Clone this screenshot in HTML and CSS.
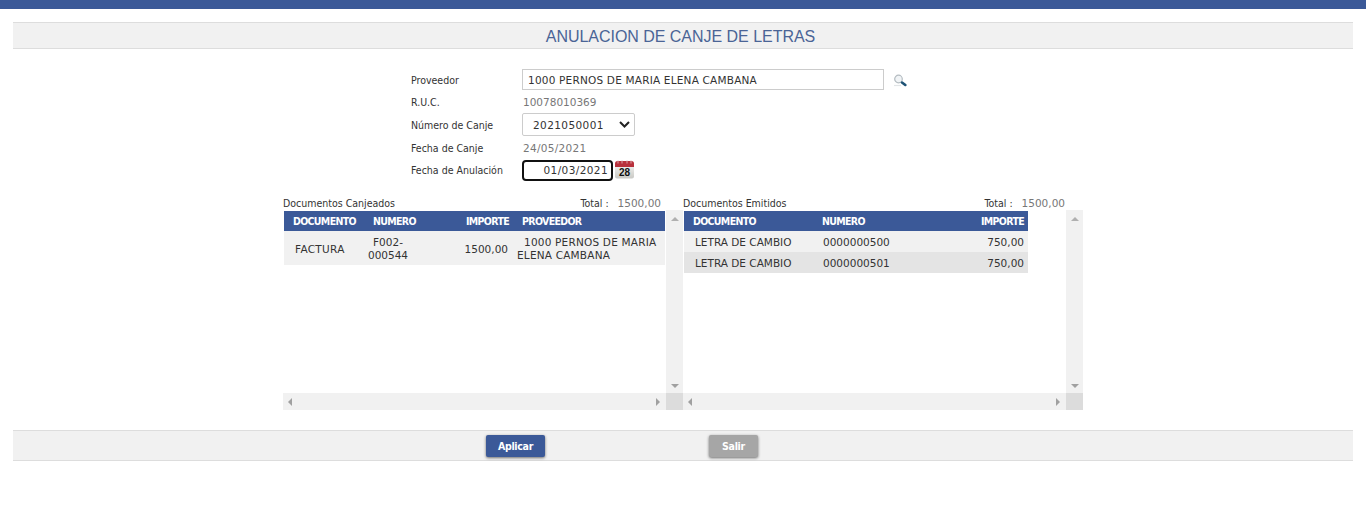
FILE: index.html
```html
<!DOCTYPE html>
<html lang="es">
<head>
<meta charset="utf-8">
<title>Anulacion de canje de letras</title>
<link rel="stylesheet" href="styles.css">
</head>
<body>
<div class="topbar"></div>
<main class="page">
  <h1 class="title">ANULACION DE CANJE DE LETRAS</h1>
  <form class="form">
    <div class="row">
      <label class="lbl">Proveedor</label>
      <input class="field field-prov" value="1000 PERNOS DE MARIA ELENA CAMBANA">
      <svg class="ico-search" width="14" height="13" viewBox="0 0 14 13"><circle cx="5.500" cy="5" r="3.800" fill="#f1f4f6" stroke="#b4bcc1" stroke-width="1.200"/><path d="M1 11.500h7" stroke="#e2e5e7" stroke-width="1.200"/><path d="M9 8.500l3.300 2.500" stroke="#1d5275" stroke-width="2.600" stroke-linecap="round"/></svg>
    </div>
    <div class="row"><span class="lbl">R.U.C.</span><span class="val">10078010369</span></div>
    <div class="row">
      <label class="lbl">Número de Canje</label>
      <div class="select">2021050001<svg width="11" height="7" viewBox="0 0 11 7"><path d="M1 1l4.500 4.500L10 1" fill="none" stroke="#222" stroke-width="2"/></svg></div>
    </div>
    <div class="row"><span class="lbl">Fecha de Canje</span><span class="val val-date">24/05/2021</span></div>
    <div class="row">
      <label class="lbl">Fecha de Anulación</label>
      <input class="field field-date" value="01/03/2021">
      <svg class="ico-cal" width="21" height="20" viewBox="0 0 21 20"><defs><linearGradient id="calbody" x1="0" y1="0" x2="0" y2="1"><stop offset="0" stop-color="#f4f4f2"/><stop offset="1" stop-color="#c9c9c5"/></linearGradient></defs><rect x="1" y="5" width="19" height="14.500" rx="2" fill="url(#calbody)"/><path d="M1 8V4.500Q1 2 3.500 2h14Q20 2 20 4.500V8z" fill="#b8313c"/><path d="M4 1.500v3M8 1.500v3M13 1.500v3M17 1.500v3" stroke="#d9a5a8" stroke-width="1"/><text x="10.500" y="17" text-anchor="middle" class="cal-num">28</text></svg>
    </div>
  </form>

  <section class="grids">
    <div class="panel panel-a">
      <div class="panel-head"><span>Documentos Canjeados</span><span class="total">Total : <b>1500,00</b></span></div>
      <div class="scroller">
        <div class="viewport">
          <table class="grid grid-left">
            <thead><tr><th class="c1">DOCUMENTO</th><th class="c2">NUMERO</th><th class="c3 num">IMPORTE</th><th class="c4">PROVEEDOR</th></tr></thead>
            <tbody><tr class="tall"><td class="c1">FACTURA</td><td class="c2 center">F002-<br>000544</td><td class="c3 num">1500,00</td><td class="c4 prov">1000 PERNOS DE MARIA ELENA CAMBANA</td></tr></tbody>
          </table>
        </div>
        <div class="vbar"><i class="arr up"></i><i class="arr down"></i></div>
        <div class="hbar"><i class="arr left"></i><i class="arr right"></i></div>
        <div class="corner"></div>
      </div>
    </div>
    <div class="panel">
      <div class="panel-head"><span>Documentos Emitidos</span><span class="total">Total : <b>1500,00</b></span></div>
      <div class="scroller">
        <div class="viewport">
          <table class="grid grid-right">
            <thead><tr><th class="d1">DOCUMENTO</th><th class="d2">NUMERO</th><th class="d3 num">IMPORTE</th></tr></thead>
            <tbody>
              <tr><td class="d1">LETRA DE CAMBIO</td><td class="d2">0000000500</td><td class="d3 num">750,00</td></tr>
              <tr class="alt"><td class="d1">LETRA DE CAMBIO</td><td class="d2">0000000501</td><td class="d3 num">750,00</td></tr>
            </tbody>
          </table>
        </div>
        <div class="vbar"><i class="arr up"></i><i class="arr down"></i></div>
        <div class="hbar"><i class="arr left"></i><i class="arr right"></i></div>
        <div class="corner"></div>
      </div>
    </div>
  </section>

  <footer class="actions">
    <button type="button" class="btn btn-primary">Aplicar</button>
    <button type="button" class="btn btn-muted">Salir</button>
  </footer>
</main>
</body>
</html>
```
FILE: styles.css
```css
* { box-sizing: border-box; }
html, body { margin: 0; height: 522px; overflow: hidden; background: #fff; }
body { font-family: "DejaVu Sans", sans-serif; font-size: 10.500px; color: #333; }
.topbar { height: 9px; background: #3b5998; }
.page { padding: 13px 13px 0; }
.title {
  margin: 0; height: 27px; padding-right: 5px; text-align: center;
  font: 400 16px/27px "Liberation Sans", sans-serif; letter-spacing: -.03px; color: #4a6496;
  background: #f1f1f1; border-top: 1px solid #ddd; border-bottom: 1px solid #ddd;
}
.form { padding: 19px 0 0 398px; display: flex; flex-direction: column; }
.row { display: flex; align-items: center; height: 22.750px; }
.lbl { width: 111px; flex: none; font-stretch: condensed; color: #333; }
.row:first-child .lbl { padding-top: 2px; }
.val { padding-left: 1px; color: #777; }
.val-date { letter-spacing: .3px; }
.field {
  font: 10.500px "DejaVu Sans", sans-serif; color: #333; letter-spacing: .2px;
  height: 21px; border: 1px solid #ccc; background: #fff; outline: 0;
}
.field-prov { width: 362px; padding: 1px 5px 0; }
.ico-search { margin-left: 9px; margin-top: 2px; }
.select {
  display: flex; align-items: center; justify-content: space-between;
  width: 113px; height: 23px; padding: 0 4px 0 10px; border: 1px solid #ccc; border-radius: 2px;
  font-size: 10.500px; color: #333; letter-spacing: .4px;
}
.field-date { width: 91px; border: 2px solid #111; border-radius: 4px; text-align: right; padding: 0 3px; letter-spacing: .4px; }
.ico-cal { margin: -2px 0 0 1px; }
.cal-num { font: 700 10px "Liberation Sans", sans-serif; fill: #111; }

.grids { display: flex; padding: 14.250px 0 0 270px; }
.panel { width: 400px; flex: none; }
.panel-head {
  display: flex; justify-content: space-between; height: 14px; line-height: 15px;
  padding-right: 18px; font-stretch: condensed; font-size: 10.500px;
}
.panel-a .panel-head { padding-right: 22px; }
.total b { font-weight: 400; color: #777; font-stretch: normal; margin-left: 6px; }
.scroller {
  display: grid; grid-template-columns: 383px 17px; grid-template-rows: 183px 17px;
  height: 200px;
}
.viewport { padding: 1px 0 0 1px; overflow: hidden; }
.vbar, .hbar { background: #f1f1f1; display: flex; justify-content: space-between; }
.vbar { flex-direction: column; align-items: center; padding: 7px 0 5px; }
.hbar { align-items: center; padding: 0 6px 0 5px; }
.corner { background: #dcdcdc; }
.arr { display: block; width: 0; height: 0; border: 4px solid transparent; }
.arr.up { border-top: 0; border-bottom: 4px solid #b0b0b0; }
.arr.down { border-bottom: 0; border-top: 4px solid #a0a0a0; }
.arr.left { border-left: 0; border-right: 4px solid #a0a0a0; }
.arr.right { border-right: 0; border-left: 4px solid #a0a0a0; }

.grid { border-collapse: collapse; table-layout: fixed; font-size: 10.500px; color: #333; }
.grid th {
  height: 20px; padding: 0 0 0 10px; background: #3b5998; color: #fff;
  font-size: 10.500px; font-weight: 700; font-stretch: condensed; letter-spacing: -.65px; text-align: left; white-space: nowrap;
}
.grid th.c1, .grid th.d1 { padding-left: 9px; }
.grid td { height: 21px; padding: 2px 4px 0 11px; background: #f1f1f1; line-height: 13px; }
.grid tr.alt td { background: #e4e4e4; }
.grid tr.tall td { height: 34px; }
.grid th.num, .grid td.num { text-align: right; padding-left: 0; padding-right: 0; }
.grid-left { width: 381px; }
.c1 { width: 79px; }
.c2 { width: 80px; }
.grid td.c2 { padding: 2px 30px 0 0; }
.grid td.c1 { letter-spacing: .3px; }
.center { text-align: center; }
.c3 { width: 66px; }
.c4 { width: 156px; }
.grid th.c4 { padding-left: 13px; }
.grid td.prov { padding: 2px 4px 0 8px; text-indent: 7px; letter-spacing: .2px; }
.grid-right { width: 344px; }
.d1 { width: 128px; }
.d2 { width: 128px; }
.d3 { width: 88px; }
.grid th.d3, .grid td.d3 { padding-right: 4px; }
.grid td.c3 { padding-right: 1px; }

.actions {
  display: flex; align-items: center; height: 31px; margin-top: 20px;
  padding-left: 473px; gap: 164px; background: #f1f1f1;
  border-top: 1px solid #ddd; border-bottom: 1px solid #ddd;
}
.btn {
  height: 22px; margin-top: 1px; border: 0; border-radius: 2px; color: #fff; cursor: pointer;
  font: 700 10.500px "DejaVu Sans", sans-serif; font-stretch: condensed; letter-spacing: -.3px;
  box-shadow: 0 1px 3px rgba(0,0,0,.55);
}
.btn-primary { width: 59px; background: #3b5998; }
.btn-muted { width: 49px; background: #a6a6a6; }
```
